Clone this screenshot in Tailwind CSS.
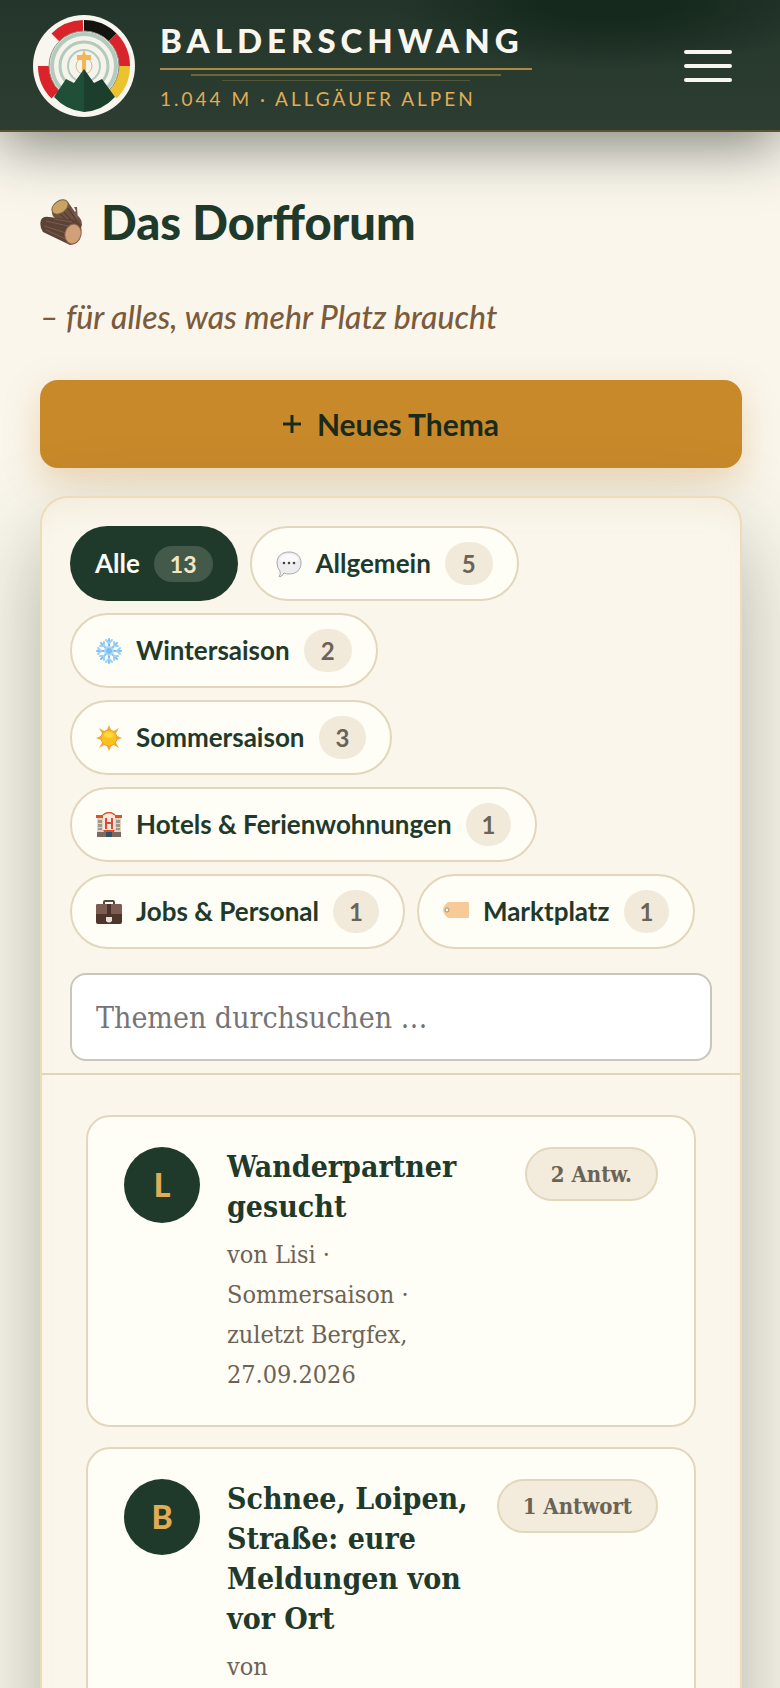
<!DOCTYPE html>
<html lang="de">
<head>
  <meta charset="UTF-8">
  <meta name="viewport" content="width=device-width, initial-scale=1.0">
  <title>Das Dorfforum – Balderschwang</title>
  <script src="https://cdn.jsdelivr.net/npm/@tailwindcss/browser@4"></script>
</head>
<body class="min-h-screen overflow-x-hidden bg-[#faf6ec] font-['Lato',sans-serif] text-[#1f3a2b]">

  <!-- Kopfzeile -->
  <header class="relative z-10 flex items-center justify-between border-b-2 border-[#5d5230] bg-[radial-gradient(ellipse_220px_70px_at_78%_0%,#16291d,#16291d_30%,transparent),linear-gradient(#24362b,#2d3d32)] pt-[15px] pr-12 pb-[13px] pl-[33px] shadow-[0_12px_60px_rgba(20,30,22,0.55)]">
    <a href="#" class="flex items-center gap-[25px]">
      <svg class="size-[102px]" viewBox="0 0 102 102" aria-hidden="true">
        <circle cx="51" cy="51" r="51" fill="#f8f6ee"/>
        <!-- Ring in den Landesfarben -->
        <g fill="none" stroke-width="12">
          <path d="M50 11A40 40 0 0 0 22.700 22.700" stroke="#d9242b"/>
          <path d="M11 51A40 40 0 0 0 22.700 79.300" stroke="#d9242b"/>
          <path d="M51 11A40 40 0 0 1 79.300 22.700" stroke="#14140f"/>
          <path d="M79.300 22.700A40 40 0 0 1 91 51" stroke="#d9242b"/>
          <path d="M91 51A40 40 0 0 1 79.300 79.300" stroke="#ecc22f"/>
        </g>
        <circle cx="51" cy="51" r="35" fill="#f6f4ea" stroke="#8b8f80"/>
        <g fill="none" stroke="#b3cabe">
          <circle cx="51" cy="51" r="32" stroke-width="4"/>
          <circle cx="51" cy="51" r="24" stroke-width="3"/>
          <circle cx="51" cy="51" r="16" stroke-width="2"/>
          <circle cx="51" cy="51" r="8" stroke="#c9bf98"/>
        </g>
        <path d="M49 56V45H44V40H49L51 35L53 40H58V45H53V56Z" fill="#f0b657"/>
        <path d="M51 54L41 68L33 64L21 82A46 46 0 0 0 51 97Z" fill="#1f4f37"/>
        <path d="M51 54L61 68L69 64L82 82A46 46 0 0 1 51 97Z" fill="#1b3f2c"/>
      </svg>
      <span class="flex flex-col">
        <span class="pr-2 text-[33px] leading-10 font-black tracking-[5px] text-[#f8f6ee]">BALDERSCHWANG</span>
        <span class="mt-2 flex flex-col items-center gap-1">
          <span class="h-[2px] w-full bg-[#ad8a44]"></span>
          <span class="h-[2px] w-10/12 bg-[#6f643c]"></span>
          <span class="h-[1px] w-8/12 bg-[#545638]"></span>
        </span>
        <span class="mt-1 text-[19px] leading-7 tracking-[3px] text-[#e0ac55]">1.044 M · ALLGÄUER ALPEN</span>
      </span>
    </a>
    <button type="button" aria-label="Menü öffnen" class="flex flex-col gap-[10px]">
      <span class="h-1 w-12 rounded-full bg-[#f8f6ee]"></span>
      <span class="h-1 w-12 rounded-full bg-[#f8f6ee]"></span>
      <span class="h-1 w-12 rounded-full bg-[#f8f6ee]"></span>
    </button>
  </header>

  <main class="pt-[58px] pr-[38px] pl-10">
    <h1 class="flex items-center gap-[18px] text-[47px] leading-[64px] font-black">
      <!-- Holzscheite -->
      <svg class="h-[46px] w-[43px]" viewBox="0 0 43 46" aria-hidden="true">
        <path d="M12 12Q11 17 17 20L38 36L42 26Q42 20 37 16L28 3Z" fill="#6e5142"/>
        <path d="M33 14L36 12L34 8L37 8L38 22Z" fill="#7a5c4b"/>
        <path d="M20 15L30 24M24 13L34 24M28 9L37 22" stroke="#4f382d" stroke-width="1"/>
        <ellipse cx="20" cy="8" rx="9" ry="6" transform="rotate(-35 20 8)" fill="#c9a664" stroke="#7d603e"/>
        <path d="M1 21Q3 17 9 18L35 21Q43 24 41 34Q39 46 30 46L3 33Q-1 27 1 21Z" fill="#5d4236"/>
        <path d="M6 22L28 27M4 27L26 34M6 31L26 40M14 20L32 23" stroke="#7b5d50" stroke-width="1"/>
        <ellipse cx="33" cy="35" rx="8" ry="10" transform="rotate(14 33 35)" fill="#d2a078" stroke="#8a6249"/>
      </svg>
      Das Dorfforum
    </h1>
    <p class="mt-8 text-[32px] leading-[62px] font-medium text-[#7a5c3c] italic">– für alles, was mehr Platz braucht</p>

    <button type="button" class="mt-8 flex h-[88px] w-full items-center justify-center gap-4 rounded-[18px] bg-[#c8892b] text-[30px] font-bold text-[#1a2a1a] shadow-[0_12px_36px_rgba(200,137,43,0.3)]">
      <svg class="size-[18px]" viewBox="0 0 18 18" fill="none" stroke="currentColor" stroke-width="3" aria-hidden="true"><path d="M9 0V18M0 9H18"/></svg>
      Neues Thema
    </button>

    <section class="mt-7 rounded-[28px] border-2 border-[#ecdcb8] bg-[#faf6ec] shadow-[0_40px_90px_rgba(40,55,35,0.35),inset_0_24px_30px_-16px_rgba(200,160,100,0.12)]">
      <div class="border-b-2 border-[#e2d6b9] px-7 pt-7 pb-3">
        <nav aria-label="Kategorien" class="flex flex-wrap gap-3 pr-2 text-[26px] font-bold">
          <button type="button" class="flex h-[75px] items-center gap-[14px] rounded-full bg-[#1f3a2b] px-[25px] text-[#fdfcf4]">
            Alle <span class="rounded-full bg-[#435a4b] px-4 text-[23px] leading-9 text-[#f3e6c4]">13</span>
          </button>
          <button type="button" class="flex h-[75px] items-center gap-[14px] rounded-full border-2 border-[#e2d6bd] bg-[#fefdf6] px-6">
            <svg class="size-[26px]" viewBox="0 0 26 26" aria-hidden="true">
              <path d="M13 1C20 1 25 5 25 12S20 23 13 23Q10 23 8 22Q6 26 3 26Q5 23 4 20Q1 17 1 12C1 5 6 1 13 1Z" fill="#ededf0" stroke="#a9a9ad"/>
              <ellipse cx="13" cy="8" rx="9" ry="5" fill="#fafafb"/>
              <g fill="#444"><circle cx="8" cy="12" r="1.300"/><circle cx="13" cy="12" r="1.300"/><circle cx="18" cy="12" r="1.300"/></g>
            </svg>
            Allgemein <span class="rounded-full bg-[#f1eadb] px-[17px] text-[24px] leading-[43px] text-[#6b6355]">5</span>
          </button>
          <button type="button" class="flex h-[75px] items-center gap-[14px] rounded-full border-2 border-[#e2d6bd] bg-[#fefdf6] px-6">
            <svg class="size-[26px]" viewBox="0 0 26 26" fill="none" stroke="#7fbfee" stroke-width="2" stroke-linecap="round" aria-hidden="true">
              <path d="M13 1V25M1 13H25M5 5L21 21M21 5L5 21"/>
              <path d="M10 2L13 5L16 2M10 24L13 21L16 24M2 10L5 13L2 16M24 10L21 13L24 16M8 4V8H4M18 4V8H22M4 18H8V22M22 18H18V22" stroke="#9dd0f5" stroke-width="2"/>
              <circle cx="13" cy="13" r="4" stroke="#a9d8f7"/>
            </svg>
            Wintersaison <span class="rounded-full bg-[#f1eadb] px-[17px] text-[24px] leading-[43px] text-[#6b6355]">2</span>
          </button>
          <button type="button" class="flex h-[75px] items-center gap-[14px] rounded-full border-2 border-[#e2d6bd] bg-[#fefdf6] px-6">
            <svg class="size-[26px]" viewBox="0 0 26 26" aria-hidden="true">
              <path d="M13 0L16 7H10ZM13 26L10 19H16ZM0 13L7 10V16ZM26 13L19 16V10ZM3 3L10 7L7 10ZM23 3L19 10L16 7ZM3 23L7 16L10 19ZM23 23L16 19L19 16Z" fill="#f3a93c"/>
              <circle cx="13" cy="13" r="8" fill="#fbc11f" stroke="#eea02c"/>
              <ellipse cx="13" cy="10" rx="5" ry="3" fill="#fdd93c"/>
            </svg>
            Sommersaison <span class="rounded-full bg-[#f1eadb] px-[17px] text-[24px] leading-[43px] text-[#6b6355]">3</span>
          </button>
          <button type="button" class="flex h-[75px] items-center gap-[14px] rounded-full border-2 border-[#e2d6bd] bg-[#fefdf6] px-6">
            <svg class="size-[26px]" viewBox="0 0 26 26" aria-hidden="true">
              <path d="M1 5H25V25H1Z" fill="#e2d3c0"/>
              <path d="M7 25V3Q13 -2 19 3V25Z" fill="#f3e9da"/>
              <path d="M0 3H7V6H0ZM19 3H26V6H19Z" fill="#d9532f"/>
              <path d="M7 3Q13 -2 19 3" fill="none" stroke="#d9532f" stroke-width="1.500"/>
              <path d="M9 6H11V10H15V6H17V17H15V12H11V17H9Z" fill="#dc4a33"/>
              <path d="M3 8V18M5 8V18M21 8V18M23 8V18" stroke="#7d7670" stroke-width="1.300" stroke-dasharray="3 1"/>
              <path d="M1 20H25V25H1Z" fill="#7b6a62"/>
              <path d="M8 20H18L19 18H7Z" fill="#d9532f"/>
              <path d="M10 20H16V25H10Z" fill="#33506b"/>
            </svg>
            Hotels &amp; Ferienwohnungen <span class="rounded-full bg-[#f1eadb] px-4 text-[24px] leading-[43px] text-[#6b6355]">1</span>
          </button>
          <button type="button" class="flex h-[75px] items-center gap-[14px] rounded-full border-2 border-[#e2d6bd] bg-[#fefdf6] px-6">
            <svg class="size-[26px]" viewBox="0 0 26 26" aria-hidden="true">
              <path d="M8 6V3Q8 2 9 2H17Q18 2 18 3V6" fill="none" stroke="#5f463d" stroke-width="2"/>
              <rect y="5" width="26" height="20" rx="2" fill="#4f362d"/>
              <path d="M0 15V7Q0 5 2 5H24Q26 5 26 7V15Z" fill="#7d5d52"/>
              <path d="M11 5H15V18H11Z" fill="#4b332b"/>
              <path d="M10 18H16V22Q13 25 10 22Z" fill="#e6e2da"/>
            </svg>
            Jobs &amp; Personal <span class="rounded-full bg-[#f1eadb] px-4 text-[24px] leading-[43px] text-[#6b6355]">1</span>
          </button>
          <button type="button" class="flex h-[75px] items-center gap-[14px] rounded-full border-2 border-[#e2d6bd] bg-[#fefdf6] px-6">
            <svg class="size-[26px]" viewBox="0 0 26 26" aria-hidden="true">
              <path d="M6 3H25Q26 3 26 4V18Q26 19 25 19H6Q4 19 2 16Q0 13 0 11Q0 9 2 6Q4 3 6 3Z" fill="#f7cb98"/>
              <circle cx="4" cy="11" r="2" fill="#fff" stroke="#a5886b"/>
            </svg>
            Marktplatz <span class="rounded-full bg-[#f1eadb] px-4 text-[24px] leading-[43px] text-[#6b6355]">1</span>
          </button>
        </nav>
        <input type="search" aria-label="Themen durchsuchen" placeholder="Themen durchsuchen …" class="mt-6 h-[88px] w-full rounded-[16px] border-2 border-[#c9c6bb] bg-white px-6 font-['DejaVu_Serif_Condensed','DejaVu_Serif',serif] text-[30px] placeholder:text-[#757575]">
      </div>

      <!-- Themenliste -->
      <ul class="flex flex-col gap-5 px-11 py-10 font-['DejaVu_Serif_Condensed','DejaVu_Serif',serif]">
        <li>
          <a href="#" class="flex items-start gap-4 rounded-[24px] border-2 border-[#e2d6bd] bg-[#fefdf6] px-9 py-[30px]">
            <span class="mr-[11px] flex size-[76px] shrink-0 items-center justify-center rounded-full bg-[#1f3a2b] font-['Lato',sans-serif] text-[32px] font-black text-[#e0ac55]">L</span>
            <span class="flex min-w-0 flex-1 flex-col gap-2">
              <span class="text-[30px] leading-10 font-bold">Wanderpartner gesucht</span>
              <span class="pr-10 text-[25px] leading-10 text-[#6b6355]">von Lisi · Sommersaison · zuletzt Bergfex, 27.09.2026</span>
            </span>
            <span class="shrink-0 rounded-full border-2 border-[#e2d6bd] bg-[#f3ebdc] px-6 text-[22px] leading-[50px] font-bold text-[#6b6355]">2 Antw.</span>
          </a>
        </li>
        <li>
          <a href="#" class="flex items-start gap-4 rounded-[24px] border-2 border-[#e2d6bd] bg-[#fefdf6] px-9 py-[30px]">
            <span class="mr-[11px] flex size-[76px] shrink-0 items-center justify-center rounded-full bg-[#1f3a2b] font-['Lato',sans-serif] text-[32px] font-black text-[#e0ac55]">B</span>
            <span class="flex min-w-0 flex-1 flex-col gap-2">
              <span class="text-[30px] leading-10 font-bold">Schnee, Loipen, Straße: eure Meldungen von vor Ort</span>
              <span class="pr-10 text-[25px] leading-10 text-[#6b6355]">von</span>
            </span>
            <span class="shrink-0 rounded-full border-2 border-[#e2d6bd] bg-[#f3ebdc] px-6 text-[22px] leading-[50px] font-bold text-[#6b6355]">1 Antwort</span>
          </a>
        </li>
      </ul>
    </section>
  </main>
</body>
</html>
